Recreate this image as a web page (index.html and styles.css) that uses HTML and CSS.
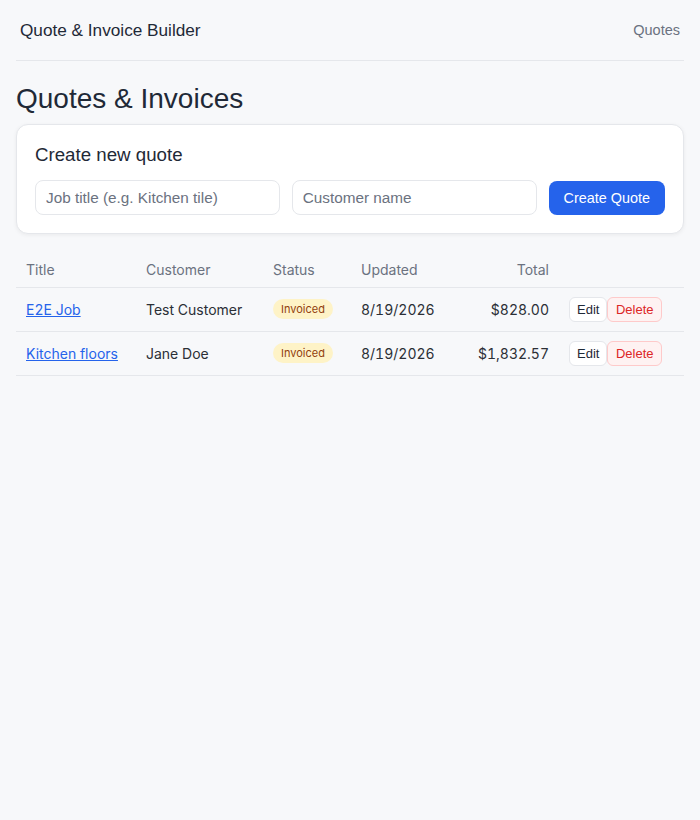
FILE: index.html
```html
<!DOCTYPE html>
<html lang="en">
<head>
    <meta charset="UTF-8">
    <meta name="viewport" content="width=device-width, initial-scale=1.0">
    <title>Quote &amp; Invoice Builder</title>
    <link rel="stylesheet" href="styles.css">
</head>
<body>
    <header class="topbar">
        <a class="brand" href="#">Quote &amp; Invoice Builder</a>
        <nav><a class="nav-link" href="#">Quotes</a></nav>
    </header>

    <main>
        <h1>Quotes &amp; Invoices</h1>

        <section class="card">
            <h2>Create new quote</h2>
            <form class="create-form" onsubmit="return false">
                <input type="text" placeholder="Job title (e.g. Kitchen tile)">
                <input type="text" placeholder="Customer name">
                <button type="submit" class="btn-primary">Create Quote</button>
            </form>
        </section>

        <table class="quotes">
            <colgroup>
                <col class="col-title">
                <col class="col-customer">
                <col class="col-status">
                <col class="col-updated">
                <col class="col-total">
                <col class="col-actions">
            </colgroup>
            <thead>
                <tr>
                    <th>Title</th>
                    <th>Customer</th>
                    <th>Status</th>
                    <th>Updated</th>
                    <th class="num">Total</th>
                    <th></th>
                </tr>
            </thead>
            <tbody>
                <tr>
                    <td><a href="#">E2E Job</a></td>
                    <td>Test Customer</td>
                    <td><span class="badge">Invoiced</span></td>
                    <td>8/19/2026</td>
                    <td class="num">$828.00</td>
                    <td class="actions"><button class="btn-sm">Edit</button><button class="btn-sm btn-danger">Delete</button></td>
                </tr>
                <tr>
                    <td><a href="#">Kitchen floors</a></td>
                    <td>Jane Doe</td>
                    <td><span class="badge">Invoiced</span></td>
                    <td>8/19/2026</td>
                    <td class="num">$1,832.57</td>
                    <td class="actions"><button class="btn-sm">Edit</button><button class="btn-sm btn-danger">Delete</button></td>
                </tr>
            </tbody>
        </table>
    </main>
</body>
</html>
```

FILE: styles.css
```css
:root {
    --bg: #f7f8fa;
    --text: #1f2937;
    --muted: #6b7280;
    --border: #e5e7eb;
    --primary: #2563eb;
}

* {
    box-sizing: border-box;
}

body {
    margin: 0;
    padding: 0 16px;
    background: var(--bg);
    color: var(--text);
    font-family: "Liberation Sans", Arial, sans-serif;
}

.topbar {
    display: flex;
    justify-content: space-between;
    align-items: center;
    padding: 18px 4px;
    line-height: 24px;
    border-bottom: 1px solid var(--border);
}

.brand {
    color: var(--text);
    text-decoration: none;
    font-size: 17.2px;
}

.nav-link {
    color: var(--muted);
    text-decoration: none;
    font-size: 14.5px;
}

h1 {
    margin: 21px 0 8px;
    font-size: 28px;
    font-weight: 400;
    line-height: 34px;
}

.card {
    background: #fff;
    border: 1px solid var(--border);
    border-radius: 12px;
    padding: 18px;
    box-shadow: 0 1px 4px rgba(0, 0, 0, 0.06);
}

.card h2 {
    margin: 0 0 13px;
    font-size: 18.7px;
    font-weight: 400;
    line-height: 24px;
}

.create-form {
    display: flex;
    gap: 12px;
    align-items: center;
}

.create-form input {
    flex: 1;
    height: 35px;
    padding: 0 10px;
    border: 1px solid var(--border);
    border-radius: 8px;
    font-family: "Liberation Sans", Arial, sans-serif;
    font-size: 15.3px;
    color: var(--text);
    background: #fff;
}

.create-form input::placeholder {
    color: #6b7280;
}

.btn-primary {
    height: 34px;
    padding: 0 15px;
    border: none;
    border-radius: 8px;
    background: var(--primary);
    color: #fff;
    font-family: "Liberation Sans", Arial, sans-serif;
    font-size: 14.4px;
    cursor: pointer;
}

.quotes {
    width: 100%;
    margin-top: 19px;
    border-collapse: collapse;
    table-layout: fixed;
    font-family: Inter, "Noto Sans", sans-serif;
}

.col-title { width: 120px; }
.col-customer { width: 127px; }
.col-status { width: 88px; }
.col-updated { width: 104px; }
.col-total { width: 104px; }
.col-actions { width: 125px; }

.quotes th {
    text-align: left;
    font-weight: 400;
    font-size: 14px;
    color: var(--muted);
    padding: 8px 10px;
    line-height: 18px;
    border-bottom: 1px solid var(--border);
}

.quotes td {
    padding: 9px 10px;
    font-size: 14px;
    line-height: 25px;
    color: #2b2f36;
    border-bottom: 1px solid var(--border);
    white-space: nowrap;
    font-variant-numeric: tabular-nums;
}

.quotes .num {
    text-align: right;
}

.quotes a {
    color: var(--primary);
}

.badge {
    display: inline-block;
    margin-top: 2px;
    padding: 2px 8px;
    border-radius: 999px;
    background: #fef3c7;
    color: #92400e;
    font-size: 11px;
    line-height: 16px;
    vertical-align: top;
}

.btn-sm {
    height: 25px;
    padding: 0 7px;
    border: 1px solid var(--border);
    border-radius: 6px;
    background: #fff;
    color: var(--text);
    font-family: "Liberation Sans", Arial, sans-serif;
    font-size: 13px;
    vertical-align: top;
    cursor: pointer;
}

.btn-danger {
    padding: 0 7.5px;
    border-color: #fecaca;
    background: #fef2f2;
    color: #dc2626;
}
```
